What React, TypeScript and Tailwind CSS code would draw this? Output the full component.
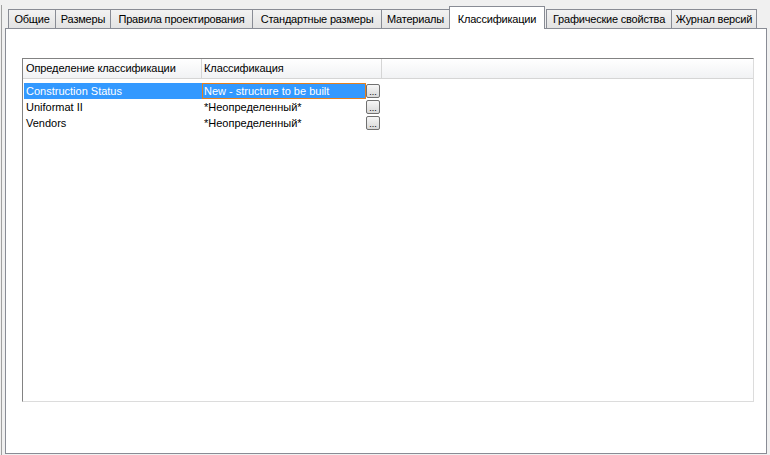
import React from 'react';

const TABS = [
  { label: 'Общие', width: 'w-[47px]' },
  { label: 'Размеры', width: 'w-[55px]' },
  { label: 'Правила проектирования', width: 'w-[142px]' },
  { label: 'Стандартные размеры', width: 'w-[129px]' },
  { label: 'Материалы', width: 'w-[68px]' },
  { label: 'Классификации', width: 'w-[96px]', active: true },
  { label: 'Графические свойства', width: 'w-[125px]' },
  { label: 'Журнал версий', width: 'w-[86px]', last: true },
];

const ROWS = [
  { name: 'Construction Status', value: 'New - structure to be built', selected: true },
  { name: 'Uniformat II', value: '*Неопределенный*' },
  { name: 'Vendors', value: '*Неопределенный*' },
];

function Tab({ label, width, active, last }: { label: string; width: string; active?: boolean; last?: boolean }) {
  if (active) {
    return (
      <div
        className={`${width} relative z-10 -mb-px flex h-[23px] shrink-0 justify-center border border-b-0 border-[#898c95] bg-white pt-[4px] tracking-[-0.2px] whitespace-nowrap text-black`}
      >
        {label}
      </div>
    );
  }
  return (
    <div
      className={`${width} flex h-[19px] shrink-0 items-center justify-center border-t border-l border-[#898c95] bg-gradient-to-b from-[#f2f2f2] to-[#e3e3e3] pt-px tracking-[-0.2px] whitespace-nowrap ${
        last ? 'border-r' : ''
      } ${label === 'Графические свойства' ? 'ml-px' : ''}`}
    >
      {label}
    </div>
  );
}

function DotsButton() {
  return (
    <div className="flex h-[14px] w-[14px] shrink-0 items-end justify-center rounded-[2px] border border-[#707070] bg-gradient-to-b from-[#f6f6f6] to-[#d8d8d8] text-[9px] leading-[9px] text-black">
      ...
    </div>
  );
}

export default function App() {
  return (
    <div
      className="flex h-[455px] w-[770px] overflow-hidden bg-[#f0f0f0] text-[11px] text-black"
      style={{ fontFamily: '"Liberation Sans", Arial, sans-serif' }}
    >
      <div className="w-px shrink-0" />
      <div className="mt-[5px] h-[450px] w-px shrink-0 bg-[#a0a0a0]" />
      <div className="ml-[3px] flex w-[762px] shrink-0 flex-col pt-[6px]">
        <div className="flex h-[22px] items-end pl-[3px]">
          {TABS.map((t) => (
            <Tab key={t.label} {...t} />
          ))}
        </div>
        <div className="h-[426px] border border-[#898c95] bg-white">
          <div className="mt-[29px] ml-[16px] flex h-[344px] w-[732px] flex-col border border-t-[#828282] border-l-[#828282] border-r-[#dcdcdc] border-b-[#dcdcdc]">
            <div className="flex h-[20px] border-b border-[#d5d5d5] bg-gradient-to-b from-white to-[#f1f2f4]">
              <div className="flex w-[179px] items-center border-r border-[#d5d5d5] pl-[3px] tracking-[-0.1px]">
                Определение классификации
              </div>
              <div className="flex w-[180px] items-center border-r border-[#d5d5d5] pl-[2px] tracking-[-0.1px]">
                Классификация
              </div>
            </div>
            <div className="mt-[4px] flex flex-col pl-px">
              {ROWS.map((r) => (
                <div key={r.name} className="flex h-[16px] items-center">
                  <div
                    className={`flex h-[16px] w-[178px] items-center pl-[2px] ${
                      r.selected ? 'bg-[#3399ff] text-white' : ''
                    }`}
                  >
                    {r.name}
                  </div>
                  <div
                    className={`flex h-[16px] w-[164px] items-center ${
                      r.selected ? 'border border-[#e5801e] bg-[#3399ff] pl-px text-white' : 'pl-[2px]'
                    }`}
                  >
                    {r.value}
                  </div>
                  <DotsButton />
                </div>
              ))}
            </div>
          </div>
        </div>
      </div>
    </div>
  );
}
